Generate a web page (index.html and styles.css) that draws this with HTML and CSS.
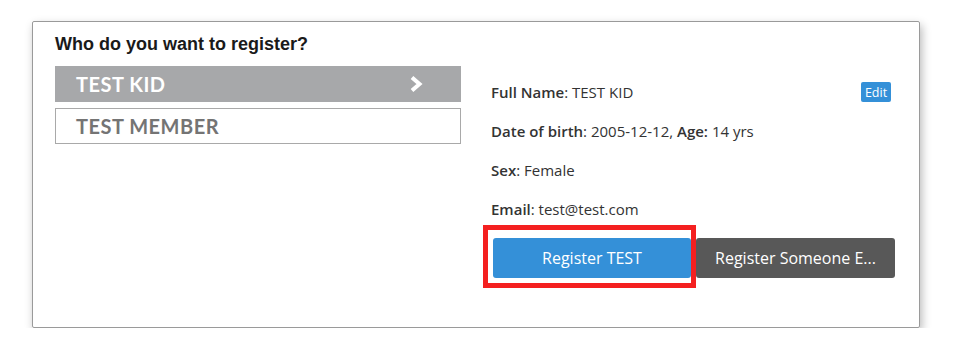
FILE: index.html
```html
<!DOCTYPE html>
<html>
<head>
<meta charset="utf-8">
<link rel="stylesheet" href="styles.css">
</head>
<body>
<div class="card">
  <h2 class="title">Who do you want to register?</h2>
  <div class="content">
    <div class="people">
      <div class="person active">
        <span>TEST KID</span>
        <svg class="chev" viewBox="0 0 14 16" width="14" height="16"><path d="M3 1.5 L10.5 8 L3 14.5" fill="none" stroke="#fff" stroke-width="4" stroke-linejoin="miter"/></svg>
      </div>
      <div class="person">
        <span>TEST MEMBER</span>
      </div>
    </div>
    <div class="details">
      <div class="row first"><span><b>Full Name</b>: TEST KID</span><button class="edit">Edit</button></div>
      <div class="row"><span><b>Date of birth</b>: 2005-12-12, <b>Age:</b> 14 yrs</span></div>
      <div class="row"><span><b>Sex</b>: Female</span></div>
      <div class="row"><span><b>Email</b>: test@test.com</span></div>
      <div class="actions">
        <div class="highlight-wrap">
          <button class="btn primary">Register TEST</button>
          <span class="highlight"></span>
        </div>
        <button class="btn dark">Register Someone E...</button>
      </div>
    </div>
  </div>
</div>
</body>
</html>
```
FILE: styles.css
```css
* { box-sizing: border-box; }
body {
  margin: 0;
  background: #fff;
  font-family: Lato, "Open Sans", sans-serif;
}
.card {
  margin: 21px 0 0 32px;
  width: 888px;
  height: 307px;
  border: 1px solid #9a9a9a;
  border-radius: 2px;
  box-shadow: 2px 4px 10px rgba(0,0,0,0.28);
  padding: 12px 24px 0 22px;
}
.title {
  margin: 0;
  font-family: "Liberation Sans", Arial, sans-serif;
  font-size: 18px;
  line-height: 21px;
  font-weight: bold;
  color: #1a1a1a;
}
.content {
  display: flex;
  margin-top: 11px;
}
.people {
  width: 406px;
  display: flex;
  flex-direction: column;
  gap: 6px;
}
.person {
  height: 36px;
  display: flex;
  align-items: center;
  justify-content: space-between;
  padding: 0 37px 0 20px;
  font-size: 20px;
  font-weight: 700;
  letter-spacing: 0.5px;
  color: #747474;
  border: 1px solid #a9a9a9;
}
.person.active {
  background: #a7a8aa;
  border-color: #a7a8aa;
  color: #fff;
}
.chev { display: block; }
.details {
  flex: 1;
  padding: 16px 0 0 30px;
  font-family: "Open Sans", Lato, sans-serif;
  font-size: 15px;
  color: #333;
}
.row {
  display: flex;
  justify-content: space-between;
  align-items: center;
  height: 20px;
  line-height: 20px;
  margin-bottom: 19px;
}
.row b { font-weight: 600; }
.edit {
  margin-right: 4px;
  border: none;
  border-radius: 2px;
  background: #3490d8;
  color: #fff;
  font-family: "Open Sans", sans-serif;
  font-size: 12.5px;
  width: 30px;
  height: 20px;
  padding: 0;
}
.actions {
  display: flex;
  gap: 5px;
  margin-top: 0;
  padding-left: 2px;
}
.highlight-wrap { position: relative; }
.btn {
  width: 198px;
  height: 40px;
  border: none;
  border-radius: 3px;
  color: #fff;
  font-family: "Open Sans", sans-serif;
  font-size: 16px;
  padding: 0;
}
.primary { background: #3490d8; }
.dark { background: #585858; width: 199px; }
.highlight {
  position: absolute;
  top: -13px;
  left: -10px;
  right: -5px;
  bottom: -10px;
  border: 5px solid #f42020;
  pointer-events: none;
}
```
